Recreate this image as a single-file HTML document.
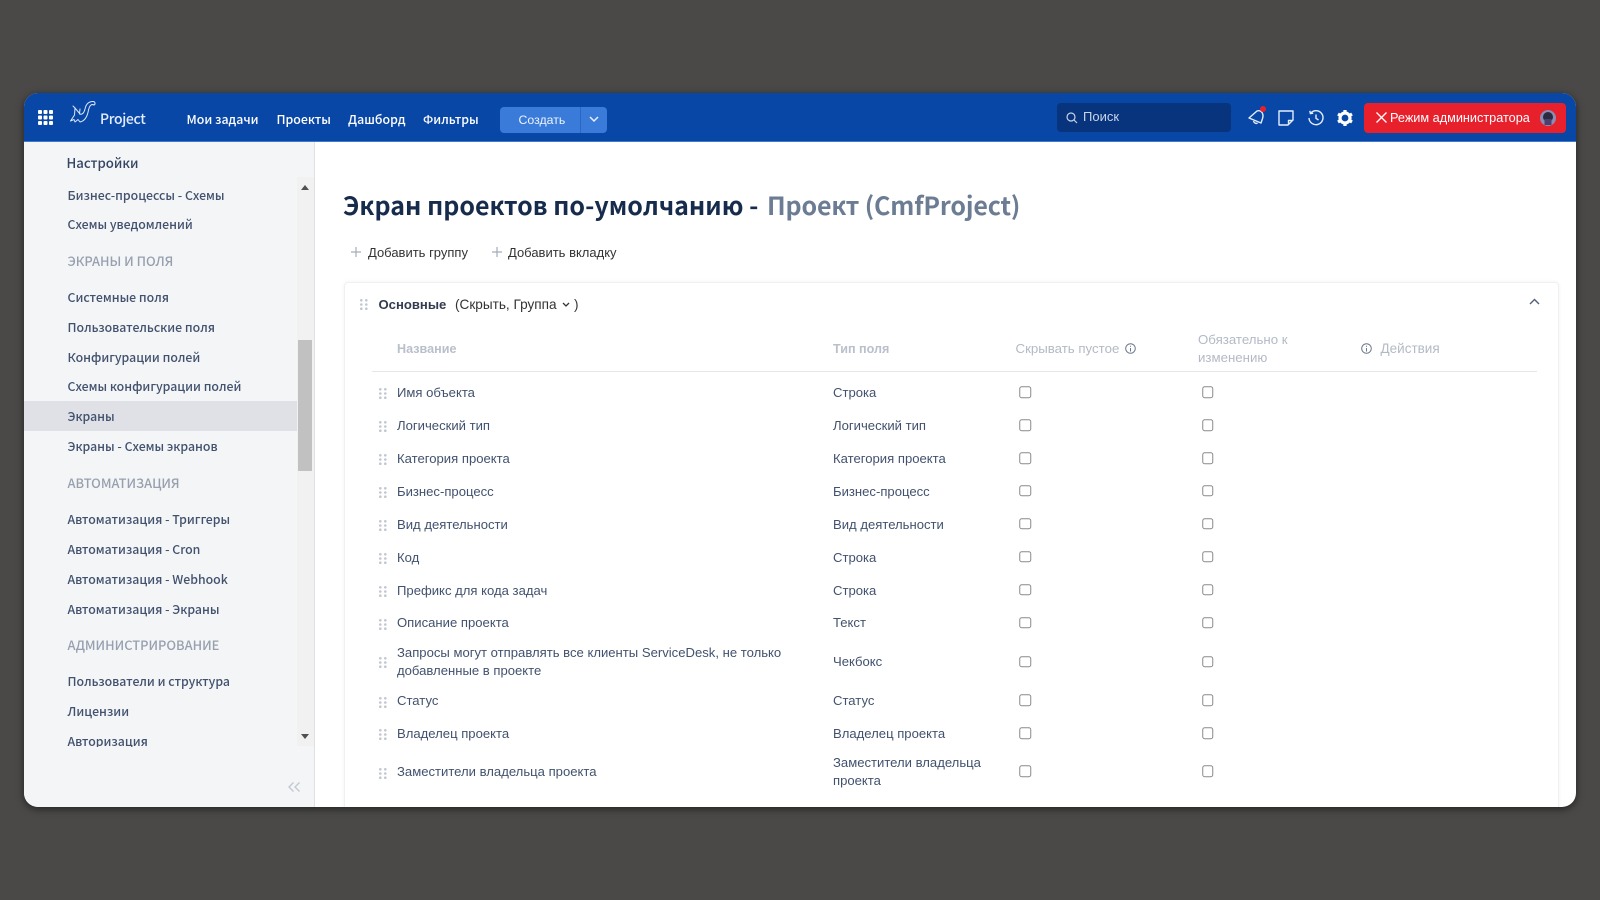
<!DOCTYPE html>
<html lang="ru"><head><meta charset="utf-8"><title>Project</title>
<style>
html,body{margin:0;padding:0;width:1600px;height:900px;overflow:hidden;background:#4a4947}
body{font-family:"Liberation Sans",sans-serif;position:relative}
#w{position:absolute;left:0;top:0;width:1600px;height:900px;filter:blur(.3px)}
#card{position:absolute;left:24px;top:93px;width:1552px;height:714px;background:#fff;border-radius:14px;box-shadow:0 2px 8px rgba(0,0,0,.55)}
.a{position:absolute;white-space:nowrap;line-height:18px;transform:translateY(-50%)}
.abs{position:absolute}
.n{font-family:"Noto Sans CJK SC","Liberation Sans",sans-serif;font-weight:500;font-size:12.35px;color:#fff}
.s{font-family:"Noto Sans CJK SC","Liberation Sans",sans-serif;font-weight:500;font-size:12.3px;color:#42526e;left:67.5px;margin-top:.3px}
.h{font-family:"Noto Sans CJK SC","Liberation Sans",sans-serif;font-weight:500;font-size:12.85px;color:#97a0af;left:67.5px;margin-top:.7px}
.t{font-size:13.1px;color:#42526e}
.th{font-size:13.25px;color:#b3bac5;margin-top:.6px}
.thb{font-size:12.6px;font-weight:700;color:#b9c0cb;margin-top:.6px}
.c{position:absolute;width:9.5px;height:9.5px;border:1.5px solid #8a8a8a;border-radius:2.5px;background:#fff;transform:translate(-50%,-50%);margin-top:-.4px}
svg{position:absolute;overflow:visible}
</style></head><body>
<svg width="0" height="0" style="position:absolute"><defs>
<g id="dr" fill="#c1c7d0"><circle cx="1.3" cy="1.3" r="1.3"/><circle cx="6.3" cy="1.3" r="1.3"/><circle cx="1.3" cy="5.5" r="1.3"/><circle cx="6.3" cy="5.5" r="1.3"/><circle cx="1.3" cy="9.7" r="1.3"/><circle cx="6.3" cy="9.7" r="1.3"/></g>
</defs></svg>
<div id="w">
<div id="card"></div>

<!-- header -->
<div class="abs" style="left:24px;top:93px;width:1552px;height:49px;background:#0847a6;border-radius:14px 14px 0 0;border-bottom:1px solid #3f78cf;box-sizing:border-box"></div>
<svg style="left:38px;top:110px" width="15" height="15" fill="#fff"><rect x="0" y="0" width="4" height="4" rx="1"/><rect x="5.5" y="0" width="4" height="4" rx="1"/><rect x="11" y="0" width="4" height="4" rx="1"/><rect x="0" y="5.5" width="4" height="4" rx="1"/><rect x="5.5" y="5.5" width="4" height="4" rx="1"/><rect x="11" y="5.5" width="4" height="4" rx="1"/><rect x="0" y="11" width="4" height="4" rx="1"/><rect x="5.5" y="11" width="4" height="4" rx="1"/><rect x="11" y="11" width="4" height="4" rx="1"/></svg>
<svg style="left:70px;top:101px" width="26" height="24" fill="none" stroke="#dce8fb" stroke-width="1" stroke-linejoin="round" stroke-linecap="round"><path d="M0.5 20 L4.5 14 L5 7 L10 13 C12 14 14 12 15 8 C16 3 19 .5 23 .5 C25.5 .5 25.5 3.5 24 4 C21 2.5 19.5 5 18.5 9 C17.5 15 15 20 10 21 L8 18.5 L5 21 L4 18.5 Z"/><path d="M5 7 L3 5 M9.5 13 L10 8"/></svg>
<div class="a n" style="left:100px;top:119px;font-size:14px;letter-spacing:-.35px;color:#e3edfc">Project</div>
<div class="a n" style="left:186.5px;top:118.5px">Мои задачи</div>
<div class="a n" style="left:276.5px;top:118.5px">Проекты</div>
<div class="a n" style="left:348px;top:118.5px">Дашборд</div>
<div class="a n" style="left:423px;top:118.5px">Фильтры</div>
<div class="abs" style="left:500px;top:107px;width:107px;height:26px;background:#3a7bd9;border-radius:4px"></div>
<div class="abs" style="left:580px;top:107px;width:1px;height:26px;background:#2b66bf"></div>
<div class="a" style="left:518.5px;top:119.5px;font-size:12.3px;color:#eef4fd">Создать</div>
<svg style="left:589px;top:116px" width="10" height="7" fill="none" stroke="#eaf1fc" stroke-width="1.5"><path d="M1 1 L5 5 L9 1"/></svg>
<div class="abs" style="left:1057px;top:103px;width:174px;height:29px;background:#08337d;border-radius:4px"></div>
<svg style="left:1066px;top:112px" width="12" height="12" fill="none" stroke="#c5d3e8" stroke-width="1.2"><circle cx="5" cy="5" r="4"/><path d="M8 8 L11 11"/></svg>
<div class="a" style="left:1083px;top:117px;font-size:13px;color:#c8d6ea">Поиск</div>
<!-- bell -->
<svg style="left:1247.5px;top:104.5px" width="18" height="22" fill="none" stroke="#e3edfb" stroke-width="1.4" stroke-linejoin="round"><path d="M1 13 L9 6 C12 5 15 7 15 11 C15 13 14 15 13 18 Z"/><path d="M5.5 16 C6 18 8 19 9.5 18"/><circle cx="15" cy="4" r="3" fill="#e8202c" stroke="none"/></svg>
<!-- note -->
<svg style="left:1278px;top:110px" width="16" height="16" fill="none" stroke="#e3edfb" stroke-width="1.4" stroke-linejoin="round"><path d="M1 1 H15 V10 L10 15 H1 Z"/><path d="M14.5 10.5 H10.5 V14.5"/></svg>
<!-- history -->
<svg style="left:1308px;top:109.5px" width="16" height="16" fill="none" stroke="#e3edfb" stroke-width="1.4"><path d="M2.6 3.2 A7 7 0 1 1 1 8"/><path d="M1.8 .8 L2.4 3.6 L5.2 3.2"/><path d="M8 4.5 V8.3 L10.5 10"/></svg>
<!-- gear -->
<svg style="left:1337px;top:109.5px" width="16" height="16"><circle cx="8" cy="8" r="5" fill="none" stroke="#fff" stroke-width="3.2"/><g stroke="#fff" stroke-width="3.2"><path d="M8 0 V3 M8 13 V16 M1 4 L3.5 5.5 M12.5 10.5 L15 12 M1 12 L3.5 10.5 M12.5 5.5 L15 4"/></g></svg>
<!-- admin -->
<div class="abs" style="left:1364px;top:103px;width:202px;height:30px;background:#e8202c;border-radius:4px"></div>
<svg style="left:1376px;top:112px" width="11" height="11" fill="none" stroke="#fff" stroke-width="1.3"><path d="M.5 .5 L10.5 10.5 M10.5 .5 L.5 10.5"/></svg>
<div class="a" style="left:1390px;top:117.5px;font-size:12.7px;color:#fff">Режим администратора</div>
<svg style="left:1540px;top:110px" width="16" height="16"><circle cx="8" cy="8" r="8" fill="#8a8db0"/><circle cx="8" cy="7" r="5" fill="#2a2a40"/><rect x="4.5" y="9" width="7" height="6" fill="#4d4070"/></svg>

<!-- sidebar -->
<div class="abs" style="left:24px;top:142px;width:291px;height:665px;background:#f4f5f7;border-right:1px solid #dfe1e6;box-sizing:border-box;border-radius:0 0 0 14px"></div>
<div class="abs" style="left:297px;top:177px;width:17px;height:569px;background:#f1f1f1"></div>
<div class="abs" style="left:298px;top:340px;width:14px;height:131px;background:#c1c1c1"></div>
<div class="abs" style="left:301px;top:185px;width:0;height:0;border-left:4px solid transparent;border-right:4px solid transparent;border-bottom:5px solid #505050"></div>
<div class="abs" style="left:301px;top:734px;width:0;height:0;border-left:4px solid transparent;border-right:4px solid transparent;border-top:5px solid #505050"></div>
<div class="abs" style="left:24px;top:401px;width:273px;height:30px;background:#dfe1e6"></div>
<div class="a s" style="left:66.5px;top:162.5px;font-size:13.2px;color:#344563">Настройки</div>
<div class="a s" style="top:194.3px">Бизнес-процессы - Схемы</div>
<div class="a s" style="top:224px">Схемы уведомлений</div>
<div class="a h" style="top:260.3px">ЭКРАНЫ И ПОЛЯ</div>
<div class="a s" style="top:296.5px">Системные поля</div>
<div class="a s" style="top:326.5px">Пользовательские поля</div>
<div class="a s" style="top:356.5px">Конфигурации полей</div>
<div class="a s" style="top:386px">Схемы конфигурации полей</div>
<div class="a s" style="top:416px">Экраны</div>
<div class="a s" style="top:446px">Экраны - Схемы экранов</div>
<div class="a h" style="top:482px">АВТОМАТИЗАЦИЯ</div>
<div class="a s" style="top:519px">Автоматизация - Триггеры</div>
<div class="a s" style="top:548.5px">Автоматизация - Cron</div>
<div class="a s" style="top:578.5px">Автоматизация - Webhook</div>
<div class="a s" style="top:608.5px">Автоматизация - Экраны</div>
<div class="a h" style="top:644.3px">АДМИНИСТРИРОВАНИЕ</div>
<div class="a s" style="top:681px">Пользователи и структура</div>
<div class="a s" style="top:711px">Лицензии</div>
<div class="abs" style="left:40px;top:732px;width:250px;height:14.5px;overflow:hidden"><div class="s" style="position:absolute;left:27.5px;top:-.5px;line-height:18px;white-space:nowrap">Авторизация</div></div>
<svg style="left:288px;top:782px" width="12" height="10" fill="none" stroke="#c1c7d0" stroke-width="1.3"><path d="M5.5 .5 L1 5 L5.5 9.5 M11.5 .5 L7 5 L11.5 9.5"/></svg>

<!-- main -->
<div class="a" style="left:343px;top:204.5px;font-family:'Noto Sans CJK SC','Liberation Sans',sans-serif;font-weight:700;font-size:25px;line-height:34px;color:#172b4d">Экран проектов по-умолчанию - <span style="color:#6b7c93;letter-spacing:-.15px;margin-left:3px">Проект (CmfProject)</span></div>
<svg style="left:351px;top:247px" width="10" height="10" stroke="#a5adba" stroke-width="1.2"><path d="M5 0 V10 M0 5 H10"/></svg>
<div class="a" style="left:368px;top:253px;font-size:13px;color:#333">Добавить группу</div>
<svg style="left:491.5px;top:247px" width="10" height="10" stroke="#a5adba" stroke-width="1.2"><path d="M5 0 V10 M0 5 H10"/></svg>
<div class="a" style="left:508px;top:253px;font-size:13px;color:#333">Добавить вкладку</div>

<div class="abs" style="left:324px;top:270px;width:1250px;height:537px;overflow:hidden">
<div class="abs" style="left:20px;top:12px;width:1215px;height:560px;border:1px solid #eef0f2;border-radius:4px;box-shadow:0 0 4px rgba(0,0,0,.06);box-sizing:border-box"></div>
</div>
<svg style="left:360px;top:299px" width="8" height="11"><use href="#dr"/></svg>
<div class="a" style="left:378.5px;top:304.5px;font-size:13.1px;font-weight:700;color:#333c4e">Основные</div>
<div class="a" style="left:455px;top:304.5px;font-size:13.6px;color:#333">(Скрыть, Группа</div>
<svg style="left:562px;top:302px" width="8" height="6" fill="none" stroke="#333" stroke-width="1.3"><path d="M1 1 L4 4 L7 1"/></svg>
<div class="a" style="left:574px;top:304.5px;font-size:13.5px;color:#333">)</div>
<svg style="left:1529px;top:298px" width="11" height="7" fill="none" stroke="#505f79" stroke-width="1.4"><path d="M1 6 L5.5 1.5 L10 6"/></svg>

<div class="a thb" style="left:397px;top:348px">Название</div>
<div class="a thb" style="left:833px;top:348px">Тип поля</div>
<div class="a th" style="left:1015.5px;top:348px">Скрывать пустое</div>
<svg style="left:1125px;top:343px" width="11" height="11" fill="none" stroke="#6b778c" stroke-width="1"><circle cx="5.5" cy="5.5" r="4.8"/><path d="M5.5 5 V8.5 M5.5 2.8 V3.8"/></svg>
<div class="a th" style="left:1198px;top:339px">Обязательно к</div>
<div class="a th" style="left:1198px;top:357px">изменению</div>
<svg style="left:1361px;top:343px" width="11" height="11" fill="none" stroke="#6b778c" stroke-width="1"><circle cx="5.5" cy="5.5" r="4.8"/><path d="M5.5 5 V8.5 M5.5 2.8 V3.8"/></svg>
<div class="a th" style="left:1380.5px;top:348px;font-size:13.5px">Действия</div>
<div class="abs" style="left:372px;top:370.5px;width:1165px;height:1.5px;background:#e4e6ea"></div>

<svg style="left:379px;top:387.5px" width="8" height="11"><use href="#dr"/></svg>
<div class="a t" style="left:397px;top:393px">Имя объекта</div><div class="a t" style="left:833px;top:393px">Строка</div>
<div class="c" style="left:1025px;top:392.5px"></div><div class="c" style="left:1207.5px;top:392.5px"></div>

<svg style="left:379px;top:421px" width="8" height="11"><use href="#dr"/></svg>
<div class="a t" style="left:397px;top:426px">Логический тип</div><div class="a t" style="left:833px;top:426px">Логический тип</div>
<div class="c" style="left:1025px;top:425.5px"></div><div class="c" style="left:1207.5px;top:425.5px"></div>

<svg style="left:379px;top:454px" width="8" height="11"><use href="#dr"/></svg>
<div class="a t" style="left:397px;top:459px">Категория проекта</div><div class="a t" style="left:833px;top:459px">Категория проекта</div>
<div class="c" style="left:1025px;top:458.5px"></div><div class="c" style="left:1207.5px;top:458.5px"></div>

<svg style="left:379px;top:487px" width="8" height="11"><use href="#dr"/></svg>
<div class="a t" style="left:397px;top:491.5px">Бизнес-процесс</div><div class="a t" style="left:833px;top:491.5px">Бизнес-процесс</div>
<div class="c" style="left:1025px;top:491px"></div><div class="c" style="left:1207.5px;top:491px"></div>

<svg style="left:379px;top:520px" width="8" height="11"><use href="#dr"/></svg>
<div class="a t" style="left:397px;top:525px">Вид деятельности</div><div class="a t" style="left:833px;top:525px">Вид деятельности</div>
<div class="c" style="left:1025px;top:524px"></div><div class="c" style="left:1207.5px;top:524px"></div>

<svg style="left:379px;top:553px" width="8" height="11"><use href="#dr"/></svg>
<div class="a t" style="left:397px;top:558px">Код</div><div class="a t" style="left:833px;top:558px">Строка</div>
<div class="c" style="left:1025px;top:557px"></div><div class="c" style="left:1207.5px;top:557px"></div>

<svg style="left:379px;top:586px" width="8" height="11"><use href="#dr"/></svg>
<div class="a t" style="left:397px;top:590.5px">Префикс для кода задач</div><div class="a t" style="left:833px;top:590.5px">Строка</div>
<div class="c" style="left:1025px;top:590px"></div><div class="c" style="left:1207.5px;top:590px"></div>

<svg style="left:379px;top:618.5px" width="8" height="11"><use href="#dr"/></svg>
<div class="a t" style="left:397px;top:623px">Описание проекта</div><div class="a t" style="left:833px;top:623px">Текст</div>
<div class="c" style="left:1025px;top:623px"></div><div class="c" style="left:1207.5px;top:623px"></div>

<svg style="left:379px;top:657px" width="8" height="11"><use href="#dr"/></svg>
<div class="a t" style="left:397px;top:653px">Запросы могут отправлять все клиенты ServiceDesk, не только</div>
<div class="a t" style="left:397px;top:671px">добавленные в проекте</div><div class="a t" style="left:833px;top:662px">Чекбокс</div>
<div class="c" style="left:1025px;top:662px"></div><div class="c" style="left:1207.5px;top:662px"></div>

<svg style="left:379px;top:696.5px" width="8" height="11"><use href="#dr"/></svg>
<div class="a t" style="left:397px;top:701px">Статус</div><div class="a t" style="left:833px;top:701px">Статус</div>
<div class="c" style="left:1025px;top:700.5px"></div><div class="c" style="left:1207.5px;top:700.5px"></div>

<svg style="left:379px;top:729px" width="8" height="11"><use href="#dr"/></svg>
<div class="a t" style="left:397px;top:734px">Владелец проекта</div><div class="a t" style="left:833px;top:734px">Владелец проекта</div>
<div class="c" style="left:1025px;top:733.5px"></div><div class="c" style="left:1207.5px;top:733.5px"></div>

<svg style="left:379px;top:768px" width="8" height="11"><use href="#dr"/></svg>
<div class="a t" style="left:397px;top:772px">Заместители владельца проекта</div>
<div class="a t" style="left:833px;top:763px">Заместители владельца</div><div class="a t" style="left:833px;top:781px">проекта</div>
<div class="c" style="left:1025px;top:771.5px"></div><div class="c" style="left:1207.5px;top:771.5px"></div>
</div>
</body></html>
